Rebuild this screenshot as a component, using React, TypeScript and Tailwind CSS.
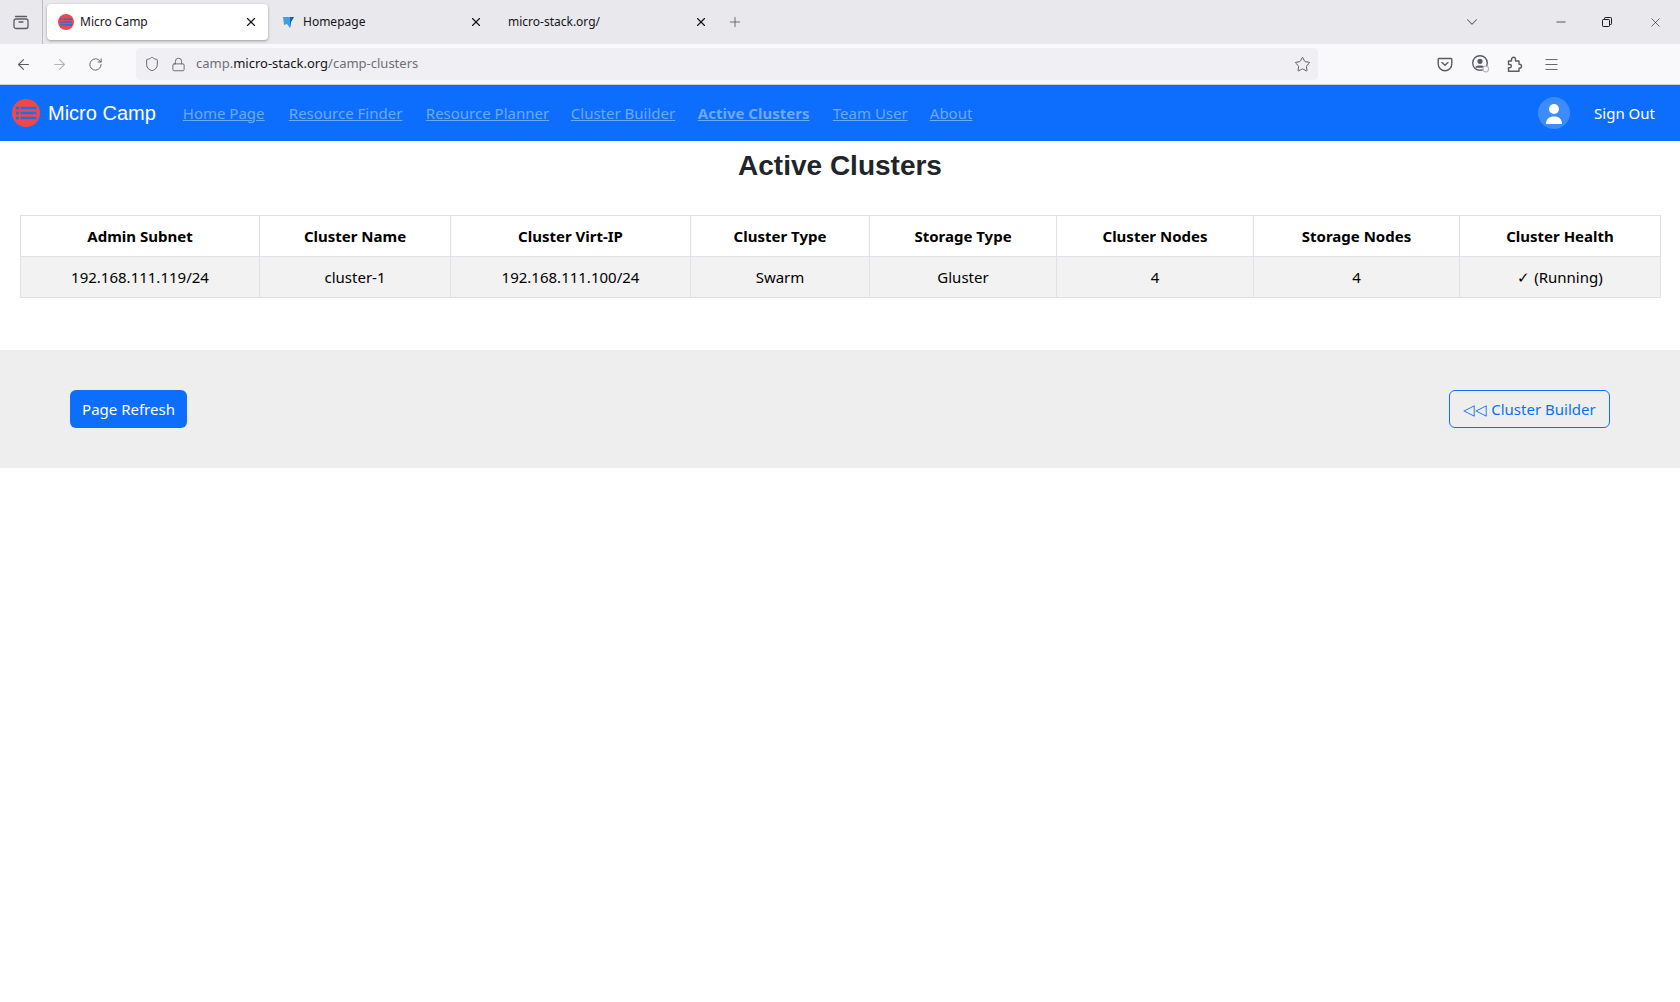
import { ArrowLeft, ArrowRight, ChevronDown, Lock, Menu, Minus, Plus, RotateCw, Shield, Star, X } from 'lucide-react'

const navLinks = [
  { label: 'Home Page', width: 'w-[82px]' },
  { label: 'Resource Finder', width: 'w-[113px]' },
  { label: 'Resource Planner', width: 'w-[121px]' },
  { label: 'Cluster Builder', width: 'w-[103px]' },
  { label: 'Active Clusters', width: 'w-[111px]', active: true },
  { label: 'Team User', width: 'w-[73px]' },
  { label: 'About', width: 'w-[44px]' },
]

const columns = [
  { title: 'Admin Subnet', value: '192.168.111.119/24', width: 'w-[239px]' },
  { title: 'Cluster Name', value: 'cluster-1', width: 'w-[191px]' },
  { title: 'Cluster Virt-IP', value: '192.168.111.100/24', width: 'w-[240px]' },
  { title: 'Cluster Type', value: 'Swarm', width: 'w-[179px]' },
  { title: 'Storage Type', value: 'Gluster', width: 'w-[187px]' },
  { title: 'Cluster Nodes', value: '4', width: 'w-[197px]' },
  { title: 'Storage Nodes', value: '4', width: 'w-[206px]' },
  { title: 'Cluster Health', value: '✓ (Running)', width: 'w-[201px]' },
]

function ServerLogo({ size }: { size: number }) {
  return (
    <svg width={size} height={size} viewBox="0 0 28 28" className="shrink-0">
      <circle cx="14" cy="14" r="14" fill="#f04848" />
      <g fill="#1d6fe8">
        <rect x="4" y="7.5" width="3" height="3" rx="0.5" />
        <rect x="4" y="12.5" width="3" height="3" rx="0.5" />
        <rect x="4" y="17.5" width="3" height="3" rx="0.5" />
        <rect x="8.5" y="7.8" width="16" height="2.4" />
        <rect x="8.5" y="12.8" width="16" height="2.4" />
        <rect x="8.5" y="17.8" width="16" height="2.4" />
      </g>
    </svg>
  )
}

function FirefoxView() {
  return (
    <svg width="16" height="16" viewBox="0 0 16 16" fill="none" stroke="#5b5b66" strokeWidth="1.3">
      <path d="M2.5 2.5h11" strokeLinecap="round" />
      <rect x="1" y="5" width="14" height="9.5" rx="2" />
      <path d="M6 8h4" strokeLinecap="round" />
    </svg>
  )
}

function TabFavicon() {
  return (
    <svg width="12" height="12" viewBox="0 0 12 12" className="shrink-0">
      <path d="M0 1h11L8 6l-1 6-3-4-3 1z" fill="#3f9fe0" />
      <path d="M7 1h4L8 6l-1 6z" fill="#1d5fa8" />
    </svg>
  )
}

function PocketIcon() {
  return (
    <svg width="16" height="16" viewBox="0 0 16 16" fill="none" stroke="#5b5b66" strokeWidth="1.4" strokeLinecap="round" strokeLinejoin="round">
      <path d="M2 2.5h12a.8.8 0 0 1 .8.8V8a6.8 6.8 0 0 1-13.6 0V3.3a.8.8 0 0 1 .8-.8z" />
      <path d="M5 6.5L8 9.3l3-2.8" />
    </svg>
  )
}

function AccountIcon() {
  return (
    <svg width="18" height="18" viewBox="0 0 18 18" fill="none">
      <circle cx="8" cy="8" r="7.3" stroke="#5b5b66" strokeWidth="1.4" />
      <circle cx="8" cy="6.3" r="2.6" fill="#5b5b66" />
      <path d="M3.6 11.5c1-1.5 7.8-1.5 8.8 0v1.3H3.6z" fill="#5b5b66" />
      <circle cx="13.8" cy="14" r="2.8" fill="#f9f9fb" stroke="#b8b8c0" strokeWidth="1.2" />
    </svg>
  )
}

function PuzzleIcon() {
  return (
    <svg width="16" height="16" viewBox="0 0 16 16" fill="none" stroke="#5b5b66" strokeWidth="1.4" strokeLinejoin="round">
      <path d="M1.5 5h3V3.3a2 2 0 0 1 4 0V5h3.5v3.3h.5a2 2 0 0 1 0 4H12v3H1.5v-3.6h1.3a1.6 1.6 0 0 0 0-3.2H1.500z" />
    </svg>
  )
}

function RestoreIcon() {
  return (
    <svg width="10" height="10" viewBox="0 0 10 10" fill="none" stroke="#1a1a1a" strokeWidth="1">
      <rect x="0.5" y="2.500" width="7" height="7" rx="0.8" />
      <path d="M2.500 2.500V1.300a.8.8 0 0 1 .8-.8h5.400a.8.8 0 0 1 .8.8v5.400a.8.8 0 0 1-.8.8H7.500" />
    </svg>
  )
}

function AvatarIcon() {
  return (
    <div className="flex h-8 w-8 items-center justify-center overflow-hidden rounded-full bg-[#3d8bfd]">
      <svg width="20" height="24" viewBox="0 0 20 24" fill="white">
        <circle cx="10" cy="8" r="5" />
        <path d="M2 23c0-5 3-7.500 8-7.500S18 18 18 23z" />
      </svg>
    </div>
  )
}

function BrowserChrome() {
  return (
    <div className="font-['Noto_Sans','Open_Sans',sans-serif] text-[#15141a]">
      <div className="flex h-11 items-center bg-[#e9e9ed]">
        <div className="flex h-full w-[43px] shrink-0 items-center justify-center border-r border-[#bcbcc2]">
          <FirefoxView />
        </div>
        <div className="ml-[4px] flex h-9 w-[221px] shrink-0 items-center rounded bg-white pl-[11px] pr-[10px] shadow-[0_1px_3px_rgba(0,0,0,0.35)]">
          <ServerLogo size={16} />
          <span className="ml-[6px] flex-1 text-xs">Micro Camp</span>
          <X size={14} strokeWidth={2} />
        </div>
        <div className="ml-[4px] flex h-9 w-[221px] shrink-0 items-center pl-[11px] pr-[10px]">
          <TabFavicon />
          <span className="ml-[8px] flex-1 text-xs">Homepage</span>
          <X size={14} strokeWidth={2} />
        </div>
        <div className="ml-[4px] flex h-9 w-[221px] shrink-0 items-center pl-[11px] pr-[10px]">
          <span className="flex-1 text-xs">micro-stack.org/</span>
          <X size={14} strokeWidth={2} />
        </div>
        <Plus size={16} strokeWidth={1.3} className="ml-[9px] text-[#5b5b66]" />
        <div className="flex-1" />
        <ChevronDown size={18} strokeWidth={1.4} className="mr-[73px] text-[#5b5b66]" />
        <Minus size={14} strokeWidth={1.2} className="mr-[34px] text-[#1a1a1a]" />
        <div className="mr-[36px]"><RestoreIcon /></div>
        <X size={15} strokeWidth={1} className="mr-[17px] text-[#1a1a1a]" />
      </div>
      <div className="flex h-[41px] items-center border-b border-[#cfcfd8] bg-[#f9f9fb]">
        <ArrowLeft size={17} strokeWidth={1.5} className="ml-[15px] text-[#5b5b66]" />
        <ArrowRight size={17} strokeWidth={1.5} className="ml-[19px] text-[#b4b4ba]" />
        <RotateCw size={15} strokeWidth={1.5} className="ml-[20px] text-[#5b5b66]" />
        <div className="ml-[33px] flex h-8 w-[1182px] items-center rounded bg-[#f0f0f4] text-[13px]">
          <Shield size={16} strokeWidth={1.4} className="ml-[8px] text-[#5b5b66]" />
          <Lock size={15} strokeWidth={1.4} className="ml-[11px] text-[#5b5b66]" />
          <span className="ml-[10px] flex-1 text-[#6e6e78]">
            camp.<span className="text-[#15141a]">micro-stack.org</span>/camp-clusters
          </span>
          <Star size={17} strokeWidth={1.4} className="mr-[7px] text-[#5b5b66]" />
        </div>
        <div className="ml-[119px]"><PocketIcon /></div>
        <div className="ml-[19px]"><AccountIcon /></div>
        <div className="ml-[17px]"><PuzzleIcon /></div>
        <Menu size={17} strokeWidth={1.3} className="ml-[20px] text-[#5b5b66]" />
      </div>
    </div>
  )
}

function Navbar() {
  return (
    <nav className="flex h-14 items-center bg-[#0d6efd] pl-3 font-['Noto_Sans','Open_Sans',sans-serif] text-[15px]">
      <ServerLogo size={28} />
      <span className="ml-2 font-['Liberation_Sans',sans-serif] text-xl text-white">Micro Camp</span>
      <div className="ml-[27px] flex gap-6">
        {navLinks.map(link => (
          <a
            key={link.label}
            href="#"
            className={`${link.width} whitespace-nowrap text-[#6ea8fe] underline ${link.active ? 'font-bold' : ''}`}
          >
            {link.label}
          </a>
        ))}
      </div>
      <div className="flex-1" />
      <AvatarIcon />
      <span className="ml-6 mr-[25px] text-white">Sign Out</span>
    </nav>
  )
}

export default function App() {
  return (
    <div className="min-h-[1002px] bg-white">
      <BrowserChrome />
      <Navbar />
      <h2 className="pt-[8px] text-center font-['Liberation_Sans',sans-serif] text-[28px] leading-[34px] font-bold text-[#212529]">
        Active Clusters
      </h2>
      <div className="mt-[32px] px-5 font-['Noto_Sans','Open_Sans',sans-serif] text-[15px] text-black">
        <table className="w-full table-fixed border-collapse text-center">
          <thead>
            <tr className="h-[41px]">
              {columns.map(col => (
                <th key={col.title} className={`${col.width} border border-[#dee2e6] font-bold`}>{col.title}</th>
              ))}
            </tr>
          </thead>
          <tbody>
            <tr className="h-[41px] bg-[#f2f2f2]">
              {columns.map(col => (
                <td key={col.title} className="border border-[#dee2e6]">{col.value}</td>
              ))}
            </tr>
          </tbody>
        </table>
      </div>
      <div className="mt-[52px] flex h-[118px] items-center justify-between bg-[#eeeeee] pl-[70px] pr-[70px] font-['Noto_Sans','Open_Sans',sans-serif] text-[15px]">
        <button className="h-[38px] w-[117px] rounded-md bg-[#0d6efd] text-white">Page Refresh</button>
        <button className="h-[38px] w-[161px] rounded-md border border-[#0d6efd] text-[#0d6efd]">◁◁ Cluster Builder</button>
      </div>
    </div>
  )
}
